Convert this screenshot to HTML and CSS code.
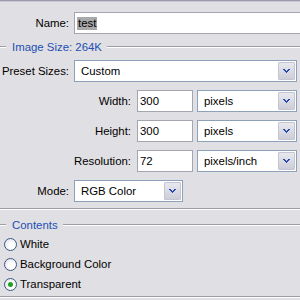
FILE: index.html
```html
<!DOCTYPE html>
<html>
<head>
    <link rel="stylesheet" href="styles.css">
</head>
<body>
    <div class="panel">
        <div class="row">
            <span class="lbl">Name:</span>
            <div class="box name"><span class="hl">test</span></div>
        </div>
        <div class="legend"><span>Image Size: 264K</span></div>
        <div class="row">
            <span class="lbl">Preset Sizes:</span>
            <div class="combo preset"><span class="val">Custom</span><span class="btn"><svg width="7" height="4" viewBox="0 0 7 4"><path d="M0 0h2v1h1v1h1v-1h1v-1h2v1h-1v1h-1v1h-1v1h-1v-1h-1v-1h-1v-1h-1z"/></svg></span></div>
        </div>
        <div class="row">
            <span class="lbl wide">Width:</span>
            <div class="box num">300</div>
            <div class="combo unit"><span class="val">pixels</span><span class="btn"><svg width="7" height="4" viewBox="0 0 7 4"><path d="M0 0h2v1h1v1h1v-1h1v-1h2v1h-1v1h-1v1h-1v1h-1v-1h-1v-1h-1v-1h-1z"/></svg></span></div>
        </div>
        <div class="row">
            <span class="lbl wide">Height:</span>
            <div class="box num">300</div>
            <div class="combo unit"><span class="val">pixels</span><span class="btn"><svg width="7" height="4" viewBox="0 0 7 4"><path d="M0 0h2v1h1v1h1v-1h1v-1h2v1h-1v1h-1v1h-1v1h-1v-1h-1v-1h-1v-1h-1z"/></svg></span></div>
        </div>
        <div class="row">
            <span class="lbl wide">Resolution:</span>
            <div class="box num">72</div>
            <div class="combo unit"><span class="val">pixels/inch</span><span class="btn"><svg width="7" height="4" viewBox="0 0 7 4"><path d="M0 0h2v1h1v1h1v-1h1v-1h2v1h-1v1h-1v1h-1v1h-1v-1h-1v-1h-1v-1h-1z"/></svg></span></div>
        </div>
        <div class="row">
            <span class="lbl">Mode:</span>
            <div class="combo mode"><span class="val">RGB Color</span><span class="btn"><svg width="7" height="4" viewBox="0 0 7 4"><path d="M0 0h2v1h1v1h1v-1h1v-1h2v1h-1v1h-1v1h-1v1h-1v-1h-1v-1h-1v-1h-1z"/></svg></span></div>
        </div>
        <div class="sep"></div>
        <div class="legend contents"><span>Contents</span></div>
        <div class="radios">
            <div class="radio"><span class="dot"></span>White</div>
            <div class="radio"><span class="dot"></span>Background Color</div>
            <div class="radio"><span class="dot on"></span>Transparent</div>
        </div>
        <div class="sep last"></div>
    </div>
</body>
</html>
```

FILE: styles.css
```css
body
{
    margin: 0;
    background-color: #e0dfe3;
    overflow: hidden;
    font-family: "Liberation Sans", Arial, sans-serif;
    font-size: 11.4px;
    color: #000;
}
.panel
{
    width: 300px;
    height: 300px;
    border-top: 1px solid #9a9aac;
    box-shadow: inset 0 1px 0 #c9c9d3;
    padding-top: 11px;
    box-sizing: border-box;
}
.row
{
    display: flex;
    align-items: center;
    height: 22px;
    margin-bottom: 8px;
}
.lbl
{
    flex: none;
    width: 69px;
    margin-right: 5px;
    text-align: right;
    white-space: nowrap;
}
.lbl.wide
{
    width: 131px;
    margin-right: 6px;
}
.box
{
    flex: none;
    height: 22px;
    box-sizing: border-box;
    border: 1px solid #a5a5ad;
    background-color: #fff;
    padding-left: 2px;
    display: flex;
    align-items: center;
}
.name
{
    width: 240px;
}
.hl
{
    background-color: #a9a9ac;
    height: 13px;
    line-height: 13px;
    padding: 0 1px;
}
.num
{
    width: 56px;
    margin-right: 4px;
}
.combo
{
    flex: none;
    height: 22px;
    box-sizing: border-box;
    border: 1px solid #8ea1bb;
    background-color: #fff;
    display: flex;
    align-items: center;
    padding: 1px;
}
.val
{
    flex: 1;
    padding-left: 5px;
}
.btn
{
    width: 17px;
    height: 18px;
    box-sizing: border-box;
    border: 1px solid #c3c5d2;
    border-radius: 1px;
    background: linear-gradient(#e8e8ef, #cdcdd8);
    display: flex;
    align-items: center;
    justify-content: center;
}
.btn svg
{
    fill: #2448b0;
}
.preset
{
    width: 223px;
}
.unit
{
    width: 100px;
}
.mode
{
    width: 109px;
}
.legend
{
    display: flex;
    align-items: center;
    height: 14px;
    margin-top: -2px;
    margin-bottom: 6px;
    color: #1d4fb3;
}
.legend::before,
.legend::after
{
    content: "";
    border-top: 1px solid #9d9da3;
    border-bottom: 1px solid #fff;
    box-sizing: border-box;
    height: 2px;
}
.legend::before
{
    width: 6px;
    margin-right: 6px;
}
.legend::after
{
    flex: 1;
    margin-left: 5px;
}
.sep
{
    height: 2px;
    box-sizing: border-box;
    border-top: 1px solid #9d9da3;
    border-bottom: 1px solid #fff;
    margin-top: -2px;
}
.legend.contents
{
    margin-top: 8px;
    margin-bottom: 2px;
}
.radios
{
    display: flex;
    flex-direction: column;
}
.radio
{
    display: flex;
    align-items: center;
    height: 20px;
}
.dot
{
    width: 13px;
    height: 13px;
    box-sizing: border-box;
    border-radius: 50%;
    border: 1px solid #3b5a88;
    background: radial-gradient(circle at 60% 60%, #fff 30%, #d9d9e0 100%);
    margin-left: 4px;
    margin-right: 3px;
    display: flex;
    align-items: center;
    justify-content: center;
}
.dot.on::after
{
    content: "";
    width: 5px;
    height: 5px;
    border-radius: 50%;
    background-color: #21a121;
}
.sep.last
{
    margin-top: 2px;
}
```
